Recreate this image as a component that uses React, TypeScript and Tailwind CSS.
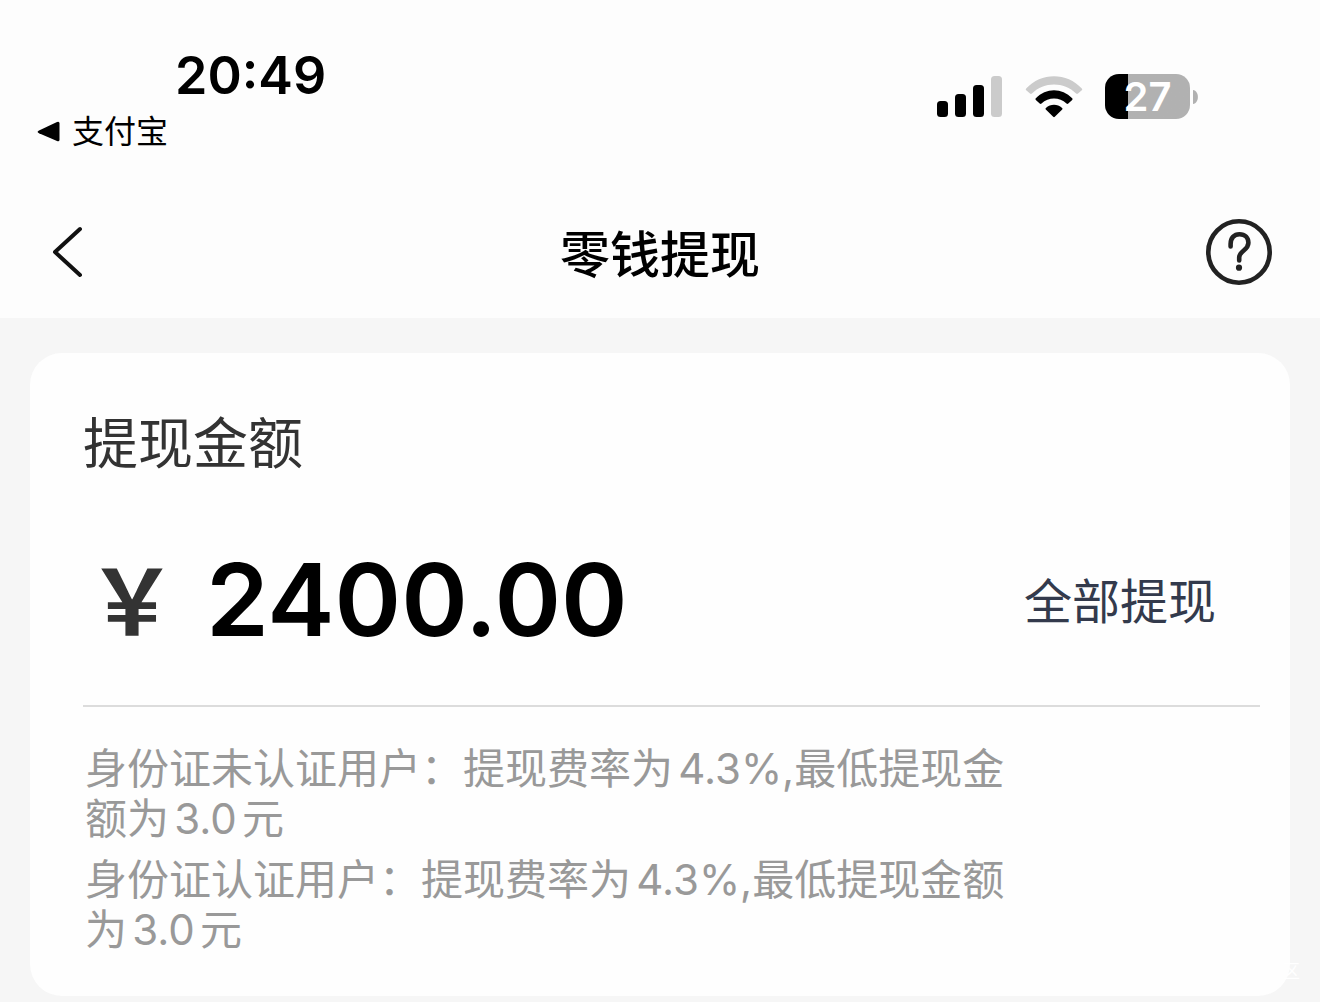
import React, { useState } from "react";

const rates = [
  { id: 1, text: "身份证未认证用户：提现费率为4.3%,最低提现金额为3.0元" },
  { id: 2, text: "身份证认证用户：提现费率为4.3%,最低提现金额为3.0元" },
];

const Signal: React.FunctionComponent = () => (
  <svg width="66" height="42" viewBox="0 0 66 42" aria-hidden="true">
    <rect x="0" y="25" width="11" height="16" rx="3.5" />
    <rect x="18" y="18" width="11" height="23" rx="3.5" />
    <rect x="36" y="9" width="11" height="32" rx="3.5" />
    <rect x="54" y="0" width="11" height="41" rx="3.5" fill="#cbcbcb" />
  </svg>
);

const Wifi: React.FunctionComponent = () => (
  <svg width="58" height="42" viewBox="0 0 58 42" aria-hidden="true">
    <path
      d="M1.2 12.6C16 -3.8 42 -3.8 56.8 12.6Q57.6 13.5 56.8 14.3L53 17.6Q52 18.4 51.1 17.5C39 5.4 19 5.4 6.9 17.5Q6 18.4 5 17.6L1.2 14.3Q.4 13.5 1.2 12.6Z"
      fill="#cbcbcb"
    />
    <path d="M10.8 22.3C21 11.6 37 11.6 47.2 22.3Q48 23.1 47.2 23.9L43.3 27.5Q42.4 28.3 41.5 27.5C34.4 20.8 23.6 20.8 16.5 27.5Q15.6 28.3 14.7 27.5L10.8 23.9Q10 23.1 10.8 22.3Z" />
    <path d="M20.9 32C25.5 27.8 32.5 27.8 37.1 32Q38 32.8 37.2 33.6L29.8 40.8Q29 41.5 28.2 40.8L20.8 33.6Q20 32.8 20.9 32Z" />
  </svg>
);

const Battery: React.FunctionComponent = () => (
  <div className="flex items-center gap-[3px]">
    <div className="flex h-[45px] w-[85px] items-center justify-center rounded-[14px] bg-linear-to-r from-black from-27% to-[#b1b1b1] to-27% text-[40px] leading-[45px] font-semibold text-white">
      27
    </div>
    <svg width="5" height="14" viewBox="0 0 5 14" aria-hidden="true">
      <path d="M0 0C6.5 1 6.5 13 0 14Z" fill="#b1b1b1" />
    </svg>
  </div>
);

function StatusBar() {
  return (
    <div className="flex items-start justify-between pt-11 pr-[122px] pl-9">
      <div>
        <p className="pl-[139px] text-[52px] leading-[64px] font-semibold">20:49</p>
        <a href="#alipay" className="flex items-center gap-3 text-[32px] leading-[48px]">
          <svg width="24" height="22" viewBox="0 0 24 22" aria-hidden="true">
            <path d="M3 9.4L21 1Q23.5 0 23.5 2.6V18.4Q23.5 21 21 20L3 12.2Q.2 10.8 3 9.4Z" />
          </svg>
          支付宝
        </a>
      </div>
      <div className="flex items-center gap-[22px] pt-[30px]">
        <Signal />
        <Wifi />
        <Battery />
      </div>
    </div>
  );
}

function NavBar() {
  return (
    <div className="flex items-start justify-between px-12 pt-[63px] pb-[27px]">
      <button type="button" aria-label="返回" className="flex h-[66px] w-[66px] items-center">
        <svg width="40" height="52" viewBox="0 0 40 52" fill="none" stroke="#111" strokeWidth="4">
          <path d="M32 3L7 26L32 49" strokeLinecap="round" strokeLinejoin="round" />
        </svg>
      </button>
      <h1 className="text-[50px] leading-[72px] font-medium">零钱提现</h1>
      <button type="button" aria-label="帮助">
        <svg width="66" height="66" viewBox="0 0 66 66" fill="none" stroke="#222" strokeWidth="4.6">
          <circle cx="33" cy="33" r="30.7" />
          <path
            d="M24.6 27.5V25C24.6 19 28 15.2 33.5 15.2C39 15.2 42.4 19 42.4 23.8C42.4 27 41 28.8 38 31.2C34.8 33.8 33.2 35.5 33.2 38.5V41.5"
            strokeLinecap="round"
          />
          <circle cx="33" cy="48.7" r="3.1" fill="#222" stroke="none" />
        </svg>
      </button>
    </div>
  );
}

export default function App() {
  const [amount, setAmount] = useState("2400.00");

  return (
    <div className="flex min-h-screen flex-col bg-[#f6f6f6] font-['Inter','Noto_Sans_CJK_SC',sans-serif] text-black">
      <header className="bg-[#fdfdfd]">
        <StatusBar />
        <NavBar />
      </header>

      <main className="relative px-[30px] pt-[35px] pb-[6px]">
        <section className="rounded-[32px] bg-[#fefefe] pt-[50px] pr-[30px] pb-[41px] pl-[53px]">
          <label htmlFor="amount" className="block text-[55px] leading-[80px] text-[#333]">
            提现金额
          </label>
          <div className="flex items-center border-b-2 border-[#dcdcdc] pt-[52px] pr-11 pb-[40px]">
            <span className="w-[123px] pb-2 pl-1 font-['Noto_Sans_CJK_SC',sans-serif] text-[90px] leading-[122px] font-bold text-[#333]">
              ￥
            </span>
            <input
              id="amount"
              type="text"
              inputMode="decimal"
              value={amount}
              onChange={(e) => setAmount(e.target.value)}
              className="h-[130px] min-w-0 flex-1 bg-transparent text-[101px] font-semibold outline-none"
            />
            <button
              type="button"
              className="shrink-0 pt-1 text-[48px] leading-[70px] text-[#333a4c]"
              onClick={() => setAmount("2400.00")}
            >
              全部提现
            </button>
          </div>
          <div className="flex max-w-[926px] flex-col gap-[11px] pt-[37px] pl-[2px] text-[42px] leading-[50px] text-[#999] [text-autospace:normal]">
            {rates.map((rate) => (
              <p key={rate.id}>{rate.text}</p>
            ))}
          </div>
        </section>
        <span className="absolute right-5 bottom-5 text-[18px] leading-5 text-white">区</span>
      </main>
    </div>
  );
}
